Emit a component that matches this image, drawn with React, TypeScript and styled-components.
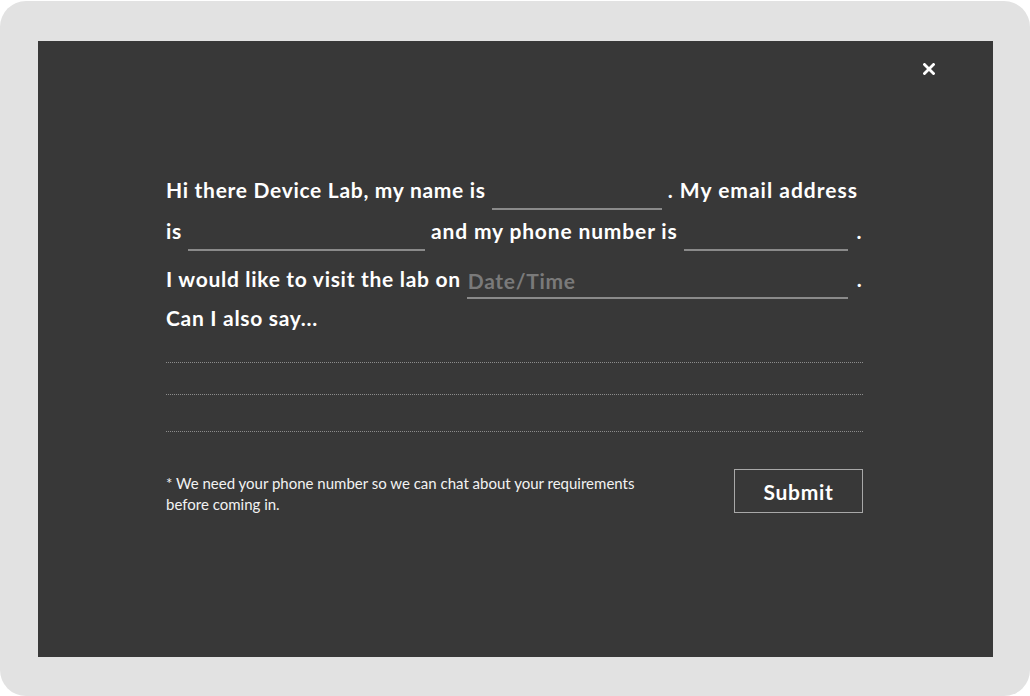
import React from "react";
import styled, { createGlobalStyle } from "styled-components";

const Global = createGlobalStyle`
  html, body { margin: 0; padding: 0; background: #ffffff; }
  body { font-family: "Lato", "Open Sans", sans-serif; }
  * { box-sizing: border-box; }
`;

const Frame = styled.div`
  width: 1030px;
  height: 695px;
  margin-top: 1px;
  background: #e2e2e2;
  border-radius: 26px;
  padding: 40px 37px 39px 38px;
  display: flex;
`;

const Panel = styled.div`
  position: relative;
  flex: 1;
  min-width: 0;
  background: #383838;
  padding: 0 130px 0 128px;
  display: flex;
  flex-direction: column;
`;

const Close = styled.button`
  position: absolute;
  top: 21px;
  right: 57px;
  width: 14px;
  height: 14px;
  padding: 0;
  border: 0;
  background: transparent;
  cursor: pointer;
  display: flex;
  align-items: center;
  justify-content: center;
`;

const Form = styled.form`
  display: flex;
  flex-direction: column;
  padding-top: 133px;
`;

const Row = styled.div<{ $height: number }>`
  display: flex;
  align-items: flex-start;
  height: ${(p) => p.$height}px;
  gap: 6px;
  color: #ffffff;
  font-size: 21px;
  font-weight: 700;
  letter-spacing: 0.7px;
  line-height: 32px;
  white-space: nowrap;
`;

const Text = styled.span<{ $spacing?: number }>`
  letter-spacing: ${(p) => (p.$spacing !== undefined ? `${p.$spacing}px` : "inherit")};
`;

const Dot = styled.span`
  margin-left: 3px;
`;

const Blank = styled.input<{ $w: number }>`
  width: ${(p) => p.$w}px;
  flex: none;
  height: 36px;
  background: transparent;
  border: 0;
  border-bottom: 2px solid #8a8a8a;
  color: #ffffff;
  font: inherit;
  letter-spacing: inherit;
  padding: 0 1px;
  outline: none;
  &::placeholder { color: #7a7a7a; }
`;

const Lines = styled.div`
  display: flex;
  flex-direction: column;
  margin-top: 28px;
`;

const Dotted = styled.div<{ $gap: number }>`
  height: 1px;
  margin-top: ${(p) => p.$gap}px;
  border-top: 1px dotted #8c8c8c;
`;

const Footer = styled.div`
  display: flex;
  justify-content: space-between;
  align-items: flex-start;
  margin-top: 37px;
`;

const Note = styled.p`
  margin: 0;
  padding-top: 4px;
  color: #f2f2f2;
  font-size: 15px;
  line-height: 21px;
  width: 500px;
`;

const Submit = styled.button`
  width: 129px;
  height: 44px;
  border: 1px solid #a8a8a8;
  background: transparent;
  color: #ffffff;
  font-family: inherit;
  font-size: 21px;
  font-weight: 700;
  letter-spacing: 0.7px;
  cursor: pointer;
`;

export default function App() {
  return (
    <>
      <Global />
      <Frame>
        <Panel>
          <Close aria-label="Close">
            <svg width="12" height="12" viewBox="0 0 12 12">
              <path d="M1.5 1.5 L10.5 10.5 M10.5 1.5 L1.5 10.5" stroke="#ffffff" strokeWidth="2.8" strokeLinecap="square" />
            </svg>
          </Close>
          <Form>
            <Row $height={41}>
              <Text>Hi there Device Lab, my name is</Text>
              <Blank $w={170} />
              <Text $spacing={1}>. My email address</Text>
            </Row>
            <Row $height={48}>
              <Text>is</Text>
              <Blank $w={237} />
              <Text $spacing={0.85}>and my phone number is</Text>
              <Blank $w={164} />
              <Dot>.</Dot>
            </Row>
            <Row $height={39}>
              <Text>I would like to visit the lab on</Text>
              <Blank $w={381} placeholder="Date/Time" />
              <Dot>.</Dot>
            </Row>
            <Row $height={32}>
              <Text>Can I also say...</Text>
            </Row>
            <Lines>
              <Dotted $gap={0} />
              <Dotted $gap={31} />
              <Dotted $gap={36} />
            </Lines>
            <Footer>
              <Note>* We need your phone number so we can chat about your requirements before coming in.</Note>
              <Submit type="button">Submit</Submit>
            </Footer>
          </Form>
        </Panel>
      </Frame>
    </>
  );
}
